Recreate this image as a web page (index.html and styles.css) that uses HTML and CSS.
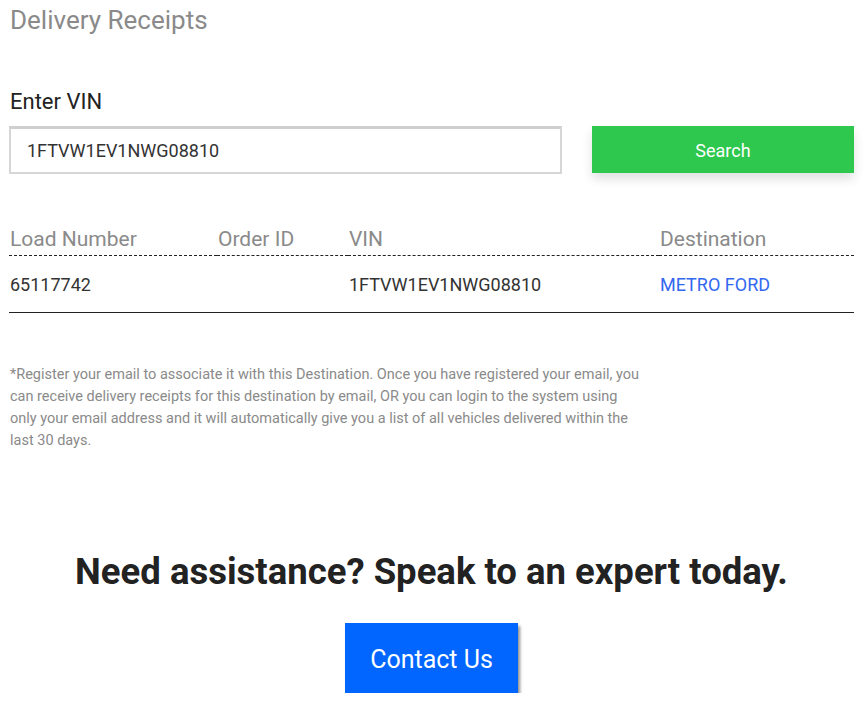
FILE: index.html
```html
<!DOCTYPE html>
<html lang="en">
<head>
    <meta charset="UTF-8">
    <meta name="viewport" content="width=device-width, initial-scale=1.0">
    <title>Delivery Receipts</title>
    <link rel="stylesheet" href="styles.css">
</head>
<body>

    <div class="page">
        <h2 class="page-title">Delivery Receipts</h2>

        <!-- VIN search -->
        <label class="vin-label" for="vin">Enter VIN</label>
        <form class="search-row" onsubmit="return false">
            <input id="vin" class="vin-input" type="text" value="1FTVW1EV1NWG08810">
            <button class="search-btn" type="submit">Search</button>
        </form>

        <!-- results -->
        <table class="receipts">
            <thead>
                <tr>
                    <th class="col-load">Load Number</th>
                    <th class="col-order">Order ID</th>
                    <th class="col-vin">VIN</th>
                    <th class="col-dest">Destination</th>
                </tr>
            </thead>
            <tbody>
                <tr>
                    <td>65117742</td>
                    <td></td>
                    <td>1FTVW1EV1NWG08810</td>
                    <td><a href="#" class="dest-link">METRO FORD</a></td>
                </tr>
            </tbody>
        </table>

        <p class="note">*Register your email to associate it with this Destination. Once you have registered your email, you<br>
            can receive delivery receipts for this destination by email, OR you can login to the system using<br>
            only your email address and it will automatically give you a list of all vehicles delivered within the<br>
            last 30 days.</p>

        <!-- help -->
        <section class="help">
            <h2>Need assistance? Speak to an expert today.</h2>
            <a href="#" class="contact-btn">Contact Us</a>
        </section>
    </div>

</body>
</html>
```

FILE: styles.css
```css
body {
    margin: 0;
    font-family: Roboto, "Liberation Sans", sans-serif;
    color: #222;
    background: #fff;
}
.page {
    padding: 0 10px 0 9px;
}
.page-title {
    margin: 0;
    padding-top: 5px;
    padding-left: 1px;
    font-size: 26px;
    font-weight: 400;
    line-height: 30px;
    color: #8a8a8a;
}
.vin-label {
    display: block;
    margin-top: 54px;
    padding-left: 1px;
    font-size: 22px;
    line-height: 26px;
    color: #222;
}
.search-row {
    display: grid;
    grid-template-columns: 553px 1fr;
    align-items: start;
    gap: 30px;
    margin: 11px 0 0;
}
.vin-input {
    box-sizing: border-box;
    height: 48px;
    padding: 0 16px;
    border: 2px solid #d6d6d9;
    border-top: 3px solid #cfcfd2;
    font-family: inherit;
    font-size: 18px;
    color: #333;
    outline: none;
}
.search-btn {
    height: 47px;
    padding-top: 3px;
    border: none;
    background-color: #2dc84d;
    color: #fff;
    font-family: inherit;
    font-size: 18px;
    cursor: pointer;
    box-shadow: 0 6px 10px rgba(0, 0, 0, 0.12);
}
.receipts {
    width: 100%;
    margin-top: 52px;
    border-collapse: collapse;
    table-layout: fixed;
}
.receipts th {
    padding: 1px 0 0 1px;
    height: 28px;
    vertical-align: top;
    text-align: left;
    font-size: 21px;
    font-weight: 400;
    color: #8a8a8a;
    border-bottom: 1px dashed #222;
}
.receipts td {
    padding: 0 0 0 1px;
    height: 56px;
    font-size: 18px;
    color: #333;
    border-bottom: 1px solid #222;
}
.col-load { width: 207px; }
.col-order { width: 130px; }
.col-vin { width: 310px; }
.dest-link {
    color: #3268f0;
    text-decoration: none;
}
.note {
    width: 680px;
    margin: 51px 0 0;
    padding-left: 1px;
    font-size: 14.5px;
    line-height: 22px;
    color: #8a8a8a;
}
.help {
    display: flex;
    flex-direction: column;
    align-items: center;
    margin-top: 98px;
}
.help h2 {
    margin: 0;
    font-size: 36.5px;
    line-height: 44px;
    font-weight: 700;
    color: #222;
}
.contact-btn {
    margin-top: 29px;
    padding: 3px 25px 0;
    height: 67px;
    line-height: 67px;
    background-color: #0066ff;
    color: #fff;
    font-size: 25px;
    text-decoration: none;
    box-shadow: 2px 3px 3px rgba(0, 0, 0, 0.45);
}
```
